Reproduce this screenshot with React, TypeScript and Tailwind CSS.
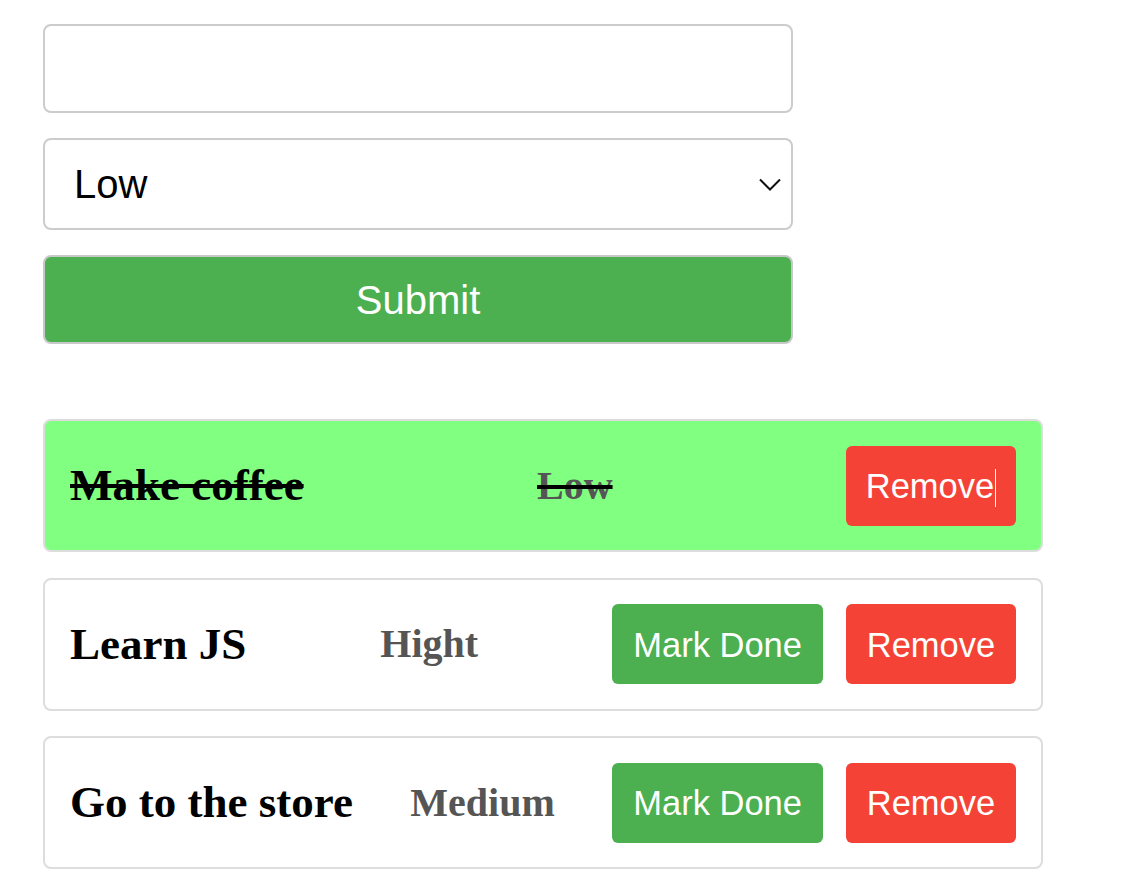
import React from 'react';

type Todo = {
  title: string;
  priority: string;
  done: boolean;
};

const todos: Todo[] = [
  { title: 'Make coffee', priority: 'Low', done: true },
  { title: 'Learn JS', priority: 'Hight', done: false },
  { title: 'Go to the store', priority: 'Medium', done: false },
];

const serif = { fontFamily: '"Liberation Serif", "Times New Roman", serif' };

const TodoItem: React.FC<{ todo: Todo }> = ({ todo }) => {
  return (
    <div
      className={
        'flex items-center justify-between w-[1000px] h-[133px] pl-[25px] pr-[25px] border-2 border-[#dddddd] rounded-[8px] ' +
        (todo.done ? 'bg-[#80ff80]' : 'bg-white')
      }
    >
      <span
        className={'text-[45px] font-bold text-black leading-none ' + (todo.done ? 'line-through' : '')}
        style={serif}
      >
        {todo.title}
      </span>
      <span
        className={'text-[40px] font-bold text-black leading-none ' + (todo.done ? 'line-through' : '')}
        style={serif}
      >
        <span className="text-[#555555]">{todo.priority}</span>
      </span>
      <div className="flex items-center gap-[23px]">
        {!todo.done && (
          <button className="h-[80px] px-[21px] pt-[3px] rounded-[6px] bg-[#4caf50] text-white text-[34.5px]">
            Mark Done
          </button>
        )}
        <button className="h-[80px] w-[170px] pt-[3px] rounded-[6px] bg-[#f44336] text-white text-[34.5px] flex items-center justify-center">
          Remove
          {todo.done && <span className="inline-block w-px h-[38px] bg-white ml-[1px] mt-[2px]" />}
        </button>
      </div>
    </div>
  );
};

const App: React.FC = () => {
  return (
    <div
      className="min-h-screen bg-white pl-[43px] pt-[24px]"
      style={{ fontFamily: '"Liberation Sans", Arial, sans-serif' }}
    >
      <form className="flex flex-col gap-[25px] w-[750px]" onSubmit={(e) => e.preventDefault()}>
        <input
          type="text"
          className="h-[89px] w-full border-2 border-[#cccccc] rounded-[8px] px-[29px] text-[40px] outline-none"
        />
        <div className="relative">
          <select
            defaultValue="Low"
            className="appearance-none h-[92px] w-full border-2 border-[#cccccc] rounded-[8px] pl-[29px] text-[40px] text-black bg-white outline-none"
          >
            <option>Low</option>
            <option>Medium</option>
            <option>Hight</option>
          </select>
          <svg
            className="absolute right-[12px] top-[40px] pointer-events-none"
            width="22"
            height="13"
            viewBox="0 0 22 13"
            fill="none"
          >
            <path d="M1 1.5 L11 11.5 L21 1.5" stroke="#111" strokeWidth="2" />
          </svg>
        </div>
        <button
          type="submit"
          className="h-[89px] w-full bg-[#4caf50] border-2 border-[#c8c8c8] rounded-[8px] text-white text-[40px]"
        >
          Submit
        </button>
      </form>

      <div className="flex flex-col gap-[25.5px] mt-[75px]">
        {todos.map((t) => (
          <TodoItem key={t.title} todo={t} />
        ))}
      </div>
    </div>
  );
};

export default App;
